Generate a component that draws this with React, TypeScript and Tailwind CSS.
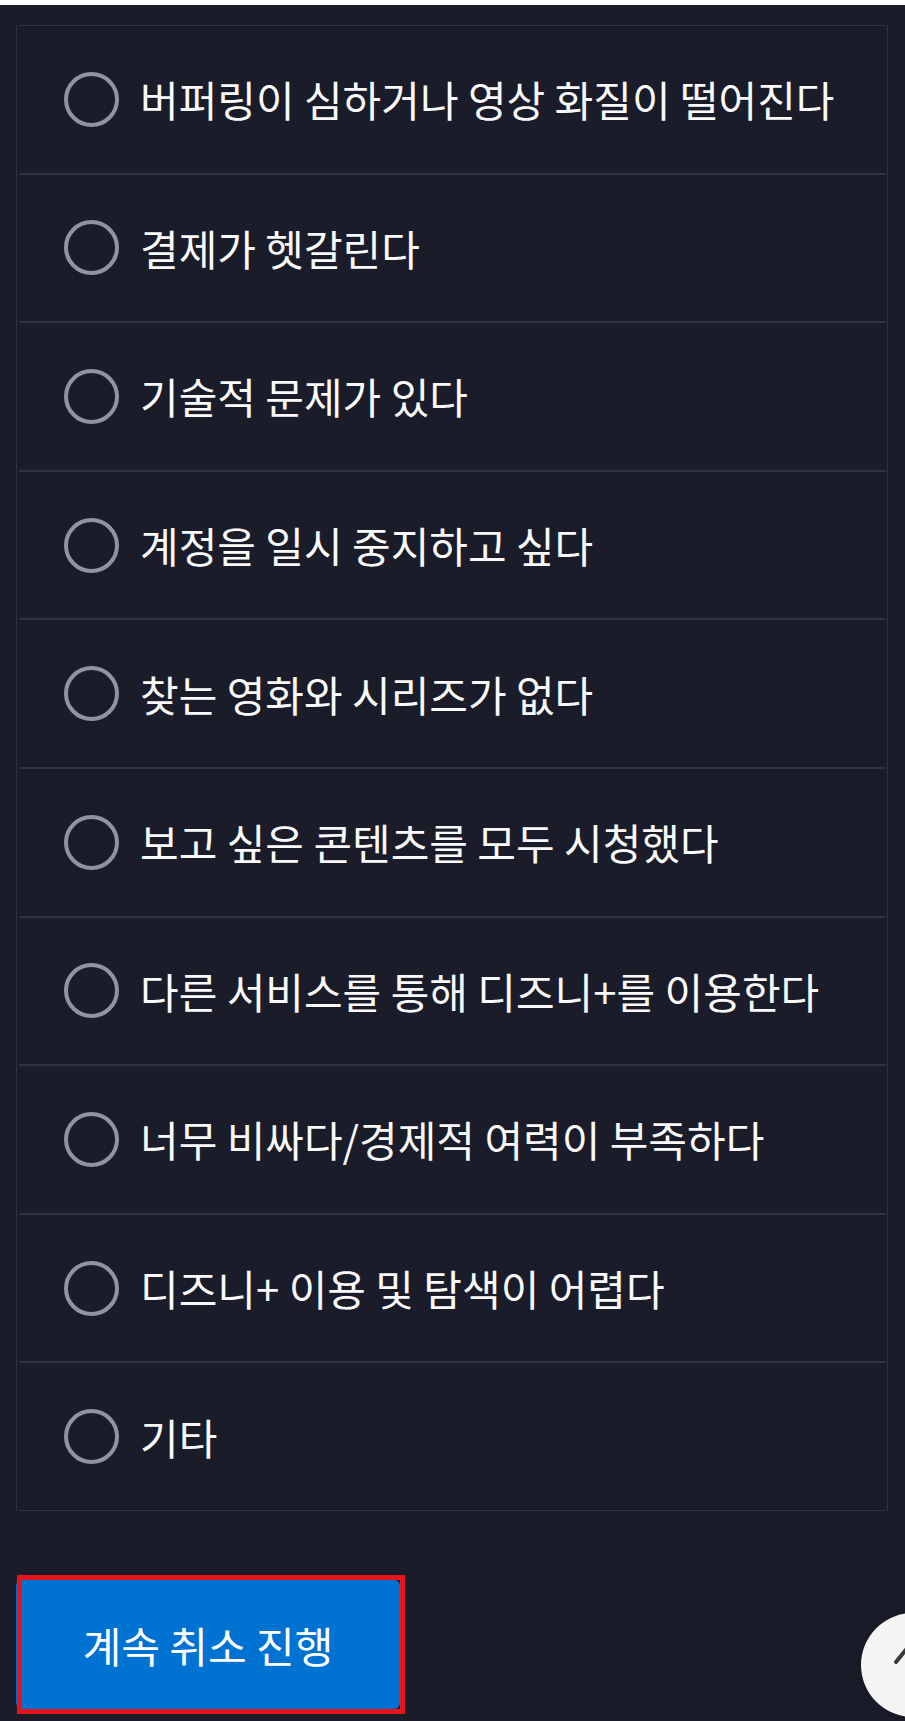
const reasons = [
  '버퍼링이 심하거나 영상 화질이 떨어진다',
  '결제가 헷갈린다',
  '기술적 문제가 있다',
  '계정을 일시 중지하고 싶다',
  '찾는 영화와 시리즈가 없다',
  '보고 싶은 콘텐츠를 모두 시청했다',
  '다른 서비스를 통해 디즈니+를 이용한다',
  '너무 비싸다/경제적 여력이 부족하다',
  '디즈니+ 이용 및 탐색이 어렵다',
  '기타',
]

function ReasonRow({ label }: { label: string }) {
  return (
    <label className="flex h-[148.6px] items-center gap-[21px] border-y border-[#30323e] pl-[45px] cursor-pointer">
      <span className="h-[55px] w-[55px] shrink-0 rounded-full border-[4px] border-[#8f949f]" />
      <span className="text-[42px] leading-none text-[#f9f9f9]">{label}</span>
    </label>
  )
}

export default function App() {
  return (
    <div
      className="relative min-h-screen overflow-hidden bg-[#1a1d29]"
      style={{ fontFamily: '"Noto Sans CJK KR", "Noto Sans", sans-serif' }}
    >
      <div className="h-[5px] bg-white" />

      {/* 취소 사유 목록 */}
      <div className="ml-4 mt-[20px] w-[872px] border-x border-[#30323e] pl-[2px] pr-[1px]">
        {reasons.map((r) => (
          <ReasonRow key={r} label={r} />
        ))}
      </div>

      {/* 계속 버튼 */}
      <div className="relative ml-4 mt-[69px] w-[384px]">
        <button className="flex h-[129px] w-full items-center justify-center rounded-[6px] bg-[#0072d2] text-[42px] text-white">
          계속 취소 진행
        </button>
        <div className="pointer-events-none absolute left-[1px] top-[-5px] h-[139px] w-[388px] border-[5px] border-[#e8141d]" />
      </div>

      {/* 맨 위로 */}
      <div className="absolute left-[861px] top-[1613px] h-[104px] w-[104px] rounded-full bg-[#f5f5f5] shadow-[0_0_6px_rgba(0,0,0,0.35)]">
        <svg width="104" height="104" viewBox="0 0 104 104" fill="none">
          <path d="M35 49 L52 28 L69 49" stroke="#3a3a3a" strokeWidth="4" strokeLinecap="round" strokeLinejoin="round" />
        </svg>
      </div>
    </div>
  )
}
